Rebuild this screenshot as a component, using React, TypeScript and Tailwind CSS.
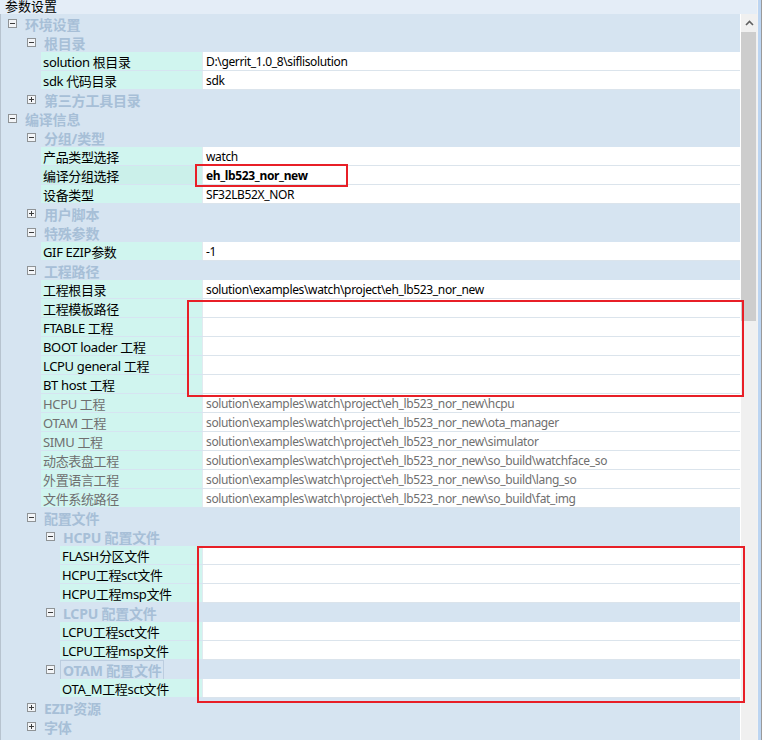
import React from "react";

type Row =
  | { t: "c"; l: number; s: string; o: boolean; focus?: boolean }
  | { t: "p"; l: number; s: string; v?: string; dim?: boolean; bold?: boolean; sel?: boolean };

const base = "solution\\examples\\watch\\project\\eh_lb523_nor_new";

const rows: Row[] = [
  { t: "c", l: 0, s: "环境设置", o: true },
  { t: "c", l: 1, s: "根目录", o: true },
  { t: "p", l: 1, s: "solution 根目录", v: "D:\\gerrit_1.0_8\\siflisolution" },
  { t: "p", l: 1, s: "sdk 代码目录", v: "sdk" },
  { t: "c", l: 1, s: "第三方工具目录", o: false },
  { t: "c", l: 0, s: "编译信息", o: true },
  { t: "c", l: 1, s: "分组/类型", o: true },
  { t: "p", l: 1, s: "产品类型选择", v: "watch" },
  { t: "p", l: 1, s: "编译分组选择", v: "eh_lb523_nor_new", bold: true, sel: true },
  { t: "p", l: 1, s: "设备类型", v: "SF32LB52X_NOR" },
  { t: "c", l: 1, s: "用户脚本", o: false },
  { t: "c", l: 1, s: "特殊参数", o: true },
  { t: "p", l: 1, s: "GIF EZIP参数", v: "-1" },
  { t: "c", l: 1, s: "工程路径", o: true },
  { t: "p", l: 1, s: "工程根目录", v: base },
  { t: "p", l: 1, s: "工程模板路径" },
  { t: "p", l: 1, s: "FTABLE 工程" },
  { t: "p", l: 1, s: "BOOT loader 工程" },
  { t: "p", l: 1, s: "LCPU general 工程" },
  { t: "p", l: 1, s: "BT host 工程" },
  { t: "p", l: 1, s: "HCPU 工程", v: base + "\\hcpu", dim: true },
  { t: "p", l: 1, s: "OTAM 工程", v: base + "\\ota_manager", dim: true },
  { t: "p", l: 1, s: "SIMU 工程", v: base + "\\simulator", dim: true },
  { t: "p", l: 1, s: "动态表盘工程", v: base + "\\so_build\\watchface_so", dim: true },
  { t: "p", l: 1, s: "外置语言工程", v: base + "\\so_build\\lang_so", dim: true },
  { t: "p", l: 1, s: "文件系统路径", v: base + "\\so_build\\fat_img", dim: true },
  { t: "c", l: 1, s: "配置文件", o: true },
  { t: "c", l: 2, s: "HCPU 配置文件", o: true },
  { t: "p", l: 2, s: "FLASH分区文件" },
  { t: "p", l: 2, s: "HCPU工程sct文件" },
  { t: "p", l: 2, s: "HCPU工程msp文件" },
  { t: "c", l: 2, s: "LCPU 配置文件", o: true },
  { t: "p", l: 2, s: "LCPU工程sct文件" },
  { t: "p", l: 2, s: "LCPU工程msp文件" },
  { t: "c", l: 2, s: "OTAM 配置文件", o: true, focus: true },
  { t: "p", l: 2, s: "OTA_M工程sct文件" },
  { t: "c", l: 1, s: "EZIP资源", o: false },
  { t: "c", l: 1, s: "字体", o: false },
  { t: "c", l: 1, s: "", o: false },
];

const catPad = ["pl-[7px]", "pl-[26px]", "pl-[45px]"];
const propIndent = ["w-[40px]", "w-[40px]", "w-[59px]"];
const labelW = ["w-[161px]", "w-[161px]", "w-[142px]"];

function Expander({ open }: { open: boolean }) {
  return (
    <svg width="9" height="9" viewBox="0 0 9 9" className="shrink-0">
      <rect x="0.5" y="0.5" width="8" height="8" fill="#f3f5f8" stroke="#8f9396" />
      <line x1="2" y1="4.5" x2="7" y2="4.5" stroke="#3c3c3c" />
      {!open && <line x1="4.5" y1="2" x2="4.5" y2="7" stroke="#3c3c3c" />}
    </svg>
  );
}

function Category({ row }: { row: Extract<Row, { t: "c" }> }) {
  return (
    <div className={`flex h-[19px] items-center bg-[#d6e4f1] ${catPad[row.l]}`}>
      <Expander open={row.o} />
      <span
        className={`ml-[5px] px-[2px] pt-[1px] text-[14px] leading-[17px] font-bold tracking-[-0.2px] text-[#a7bfd7] ${
          row.focus ? "border border-[#bccddf]" : "border border-transparent"
        }`}
      >
        {row.s}
      </span>
    </div>
  );
}

function Prop({ row }: { row: Extract<Row, { t: "p" }> }) {
  const color = row.dim ? "text-[#6f6f6f]" : "text-black";
  return (
    <div className="flex h-[19px] bg-[#d6e4f1]">
      <div className={`shrink-0 ${propIndent[row.l]}`} />
      <div
        className={`h-[18px] shrink-0 pl-[2px] pt-[1px] text-[13px] leading-[18px] tracking-[-0.35px] whitespace-nowrap overflow-hidden ${labelW[row.l]} ${color} ${
          row.sel ? "bg-[#cbf0ea]" : "bg-[#d0f5ef]"
        }`}
      >
        {row.s}
      </div>
      <div className="w-[1px] h-[18px] bg-[#e2eaf0] shrink-0" />
      <div className="flex-1 flex flex-col">
        <div
          className={`h-[18px] overflow-hidden bg-white pl-[3px] pt-[1px] text-[12px] leading-[18px] tracking-[-0.35px] whitespace-nowrap ${color} ${
            row.bold ? "font-bold" : ""
          }`}
        >
          {row.v ?? ""}
        </div>
        <div className="h-[1px] bg-[#dbe4ec]" />
      </div>
    </div>
  );
}

export default function App() {
  return (
    <div className="relative flex h-[740px] w-[762px] overflow-hidden bg-[#d6e4f1] font-['Noto_Sans','Noto_Sans_CJK_SC',sans-serif]">
      <div className="flex w-[757px] flex-col">
        <div className="h-[14px] shrink-0 overflow-hidden bg-[#e4edf7] pl-[5px] text-[13px] leading-[12px] text-black">
          参数设置
        </div>
        <div className="flex flex-1 overflow-hidden border-l border-[#b7c3cf]">
          <div className="w-[739px] shrink-0">
            {rows.map((r, i) =>
              r.t === "c" ? <Category key={i} row={r} /> : <Prop key={i} row={r} />
            )}
          </div>
          <div className="w-[1px] bg-white" />
          <div className="flex w-[16px] flex-col bg-[#f0f0f0]">
            <div className="flex h-[18px] items-center justify-center">
              <svg width="9" height="6" viewBox="0 0 9 6">
                <path d="M1 5 L4.5 1.5 L8 5" fill="none" stroke="#606060" strokeWidth="1.6" />
              </svg>
            </div>
            <div className="h-[289px] w-[15px] bg-[#cdcdcd]" />
          </div>
        </div>
      </div>
      <div className="flex w-[5px]">
        <div className="w-[1px] bg-[#f2f2f2]" />
        <div className="w-[3px] bg-[#bcd5f2]" />
        <div className="w-[1px] bg-[#9a9a9a]" />
      </div>

      <div className="absolute left-[195px] top-[164px] h-[23px] w-[153px] border-2 border-[#e81f27]" />
      <div className="absolute left-[187px] top-[300px] h-[97px] w-[557px] border-2 border-[#e81f27]" />
      <div className="absolute left-[197px] top-[546px] h-[157px] w-[548px] border-2 border-[#e81f27]" />
    </div>
  );
}
